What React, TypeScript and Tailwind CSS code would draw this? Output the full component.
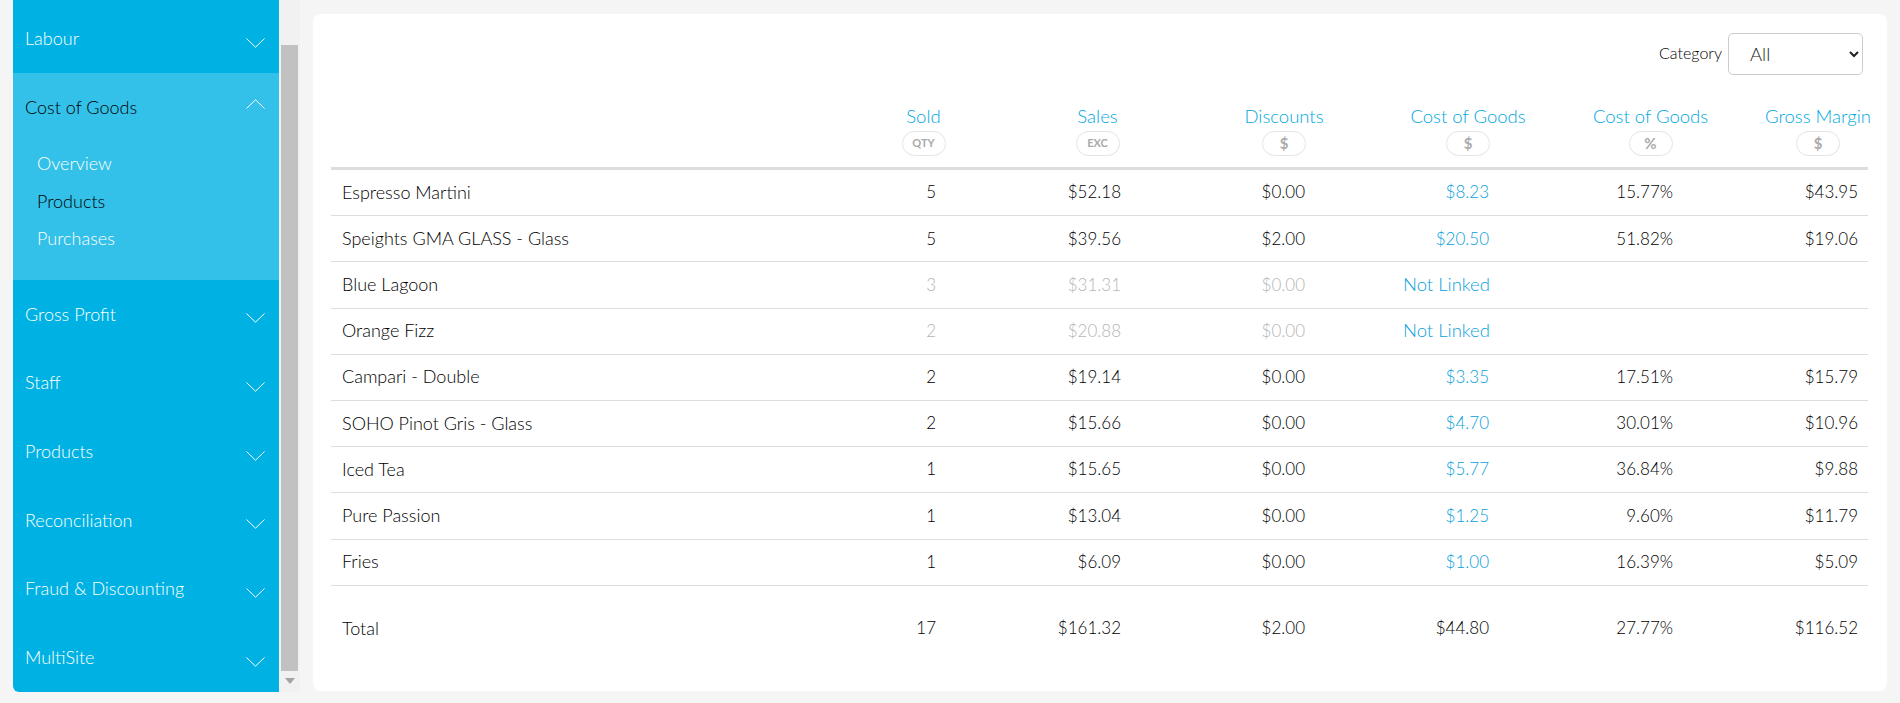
import { ReactNode } from "react";

type Row = {
  name: string;
  sold: string;
  sales: string;
  discounts: string;
  cost: string;
  costPct: string;
  margin: string;
};

const rows: Row[] = [
  { name: "Espresso Martini", sold: "5", sales: "$52.18", discounts: "$0.00", cost: "$8.23", costPct: "15.77%", margin: "$43.95" },
  { name: "Speights GMA GLASS - Glass", sold: "5", sales: "$39.56", discounts: "$2.00", cost: "$20.50", costPct: "51.82%", margin: "$19.06" },
  { name: "Blue Lagoon", sold: "3", sales: "$31.31", discounts: "$0.00", cost: "Not Linked", costPct: "", margin: "" },
  { name: "Orange Fizz", sold: "2", sales: "$20.88", discounts: "$0.00", cost: "Not Linked", costPct: "", margin: "" },
  { name: "Campari - Double", sold: "2", sales: "$19.14", discounts: "$0.00", cost: "$3.35", costPct: "17.51%", margin: "$15.79" },
  { name: "SOHO Pinot Gris - Glass", sold: "2", sales: "$15.66", discounts: "$0.00", cost: "$4.70", costPct: "30.01%", margin: "$10.96" },
  { name: "Iced Tea", sold: "1", sales: "$15.65", discounts: "$0.00", cost: "$5.77", costPct: "36.84%", margin: "$9.88" },
  { name: "Pure Passion", sold: "1", sales: "$13.04", discounts: "$0.00", cost: "$1.25", costPct: "9.60%", margin: "$11.79" },
  { name: "Fries", sold: "1", sales: "$6.09", discounts: "$0.00", cost: "$1.00", costPct: "16.39%", margin: "$5.09" },
];

function Chevron({ up }: { up?: boolean }) {
  return (
    <svg
      width="19"
      height="10"
      viewBox="0 0 19 10"
      fill="none"
      stroke="#ffffff"
      strokeWidth="1"
      className={up ? "mb-[8px]" : "mt-[8px]"}
    >
      <path d={up ? "M0.5 9.5L9.5 0.8L18.5 9.5" : "M0.5 0.5L9.5 9.2L18.5 0.5"} />
    </svg>
  );
}

function NavRow({ label, className = "h-[68.67px]" }: { label: string; className?: string }) {
  return (
    <div className={`flex items-center justify-between pl-[12px] pr-[14px] text-white ${className}`}>
      <span>{label}</span>
      <Chevron />
    </div>
  );
}

function Sidebar() {
  return (
    <div className="flex h-[692px] w-[266px] flex-col rounded-bl-md bg-[#00b2e3] text-[18px] font-light">
      <NavRow label="Labour" className="h-[73px] pt-[4px]" />
      <div className="h-[207px] bg-[#33c1e9]">
        <div className="flex h-[69px] items-center justify-between pl-[12px] pr-[14px] text-[#000000]">
          <span>Cost of Goods</span>
          <Chevron up />
        </div>
        <div className="pl-[24px] pt-[3px]">
          <div className="flex h-[37.5px] items-center text-white">Overview</div>
          <div className="flex h-[37.5px] items-center text-[#000000]">Products</div>
          <div className="flex h-[37.5px] items-center text-white">Purchases</div>
        </div>
      </div>
      <NavRow label="Gross Profit" />
      <NavRow label="Staff" />
      <NavRow label="Products" />
      <NavRow label="Reconciliation" />
      <NavRow label="Fraud & Discounting" />
      <NavRow label="MultiSite" />
    </div>
  );
}

function Scrollbar() {
  return (
    <div className="flex h-[692px] w-[21px] flex-col items-center bg-[#f1f1f1] pt-[45px]">
      <div className="h-[626px] w-[17px] bg-[#c1c1c1]" />
      <svg width="10" height="6" viewBox="0 0 10 6" className="mt-[7px]">
        <path d="M0 0H10L5 6Z" fill="#a3a3a3" />
      </svg>
    </div>
  );
}

function HeadCell({ title, unit, className, small }: { title: string; unit: string; className: string; small?: boolean }) {
  return (
    <div className={`flex flex-col items-center ${className}`}>
      <span className="h-[24px] text-[18.5px] leading-[24px] font-light whitespace-nowrap text-[#00a8e0]">{title}</span>
      <span
        className={`mt-[3px] flex h-[25px] w-[44px] items-center justify-center rounded-full border border-[#e4e4e4] font-bold text-[#aaaaaa] ${
          small ? "text-[11px]" : "text-[15px]"
        }`}
      >
        {unit}
      </span>
    </div>
  );
}

function Cell({ className, children }: { className: string; children?: ReactNode }) {
  return <div className={`text-right text-[17px] whitespace-nowrap ${className}`}>{children}</div>;
}

export default function App() {
  return (
    <div className="flex h-[703px] w-[1900px] overflow-hidden bg-[#f5f5f5] pl-[13px] font-['Lato',sans-serif]">
      <Sidebar />
      <Scrollbar />
      <div className="mt-[14px] ml-[13px] h-[677px] w-[1574px] rounded-lg bg-white pt-[19px] pr-[19px] pl-[18px]">
        <div className="flex h-[42px] items-center justify-end gap-[6px] pr-[5px]">
          <span className="mb-[2px] text-[16px] font-light text-[#000000]">Category</span>
          <select className="h-[42px] w-[135px] rounded-[5px] border border-[#cccccc] bg-white pl-[17px] text-[18.5px] font-light text-[#222222]">
            <option>All</option>
          </select>
        </div>

        <div className="mt-[29px] flex h-[66px] border-b-[3px] border-[#dddddd]">
          <div className="w-[486px]" />
          <HeadCell title="Sold" unit="QTY" small className="w-[213px]" />
          <HeadCell title="Sales" unit="EXC" small className="w-[135px]" />
          <HeadCell title="Discounts" unit="$" className="w-[238px]" />
          <HeadCell title="Cost of Goods" unit="$" className="w-[130px]" />
          <HeadCell title="Cost of Goods" unit="%" className="w-[235px]" />
          <HeadCell title="Gross Margin" unit="$" className="w-[100px]" />
        </div>

        {rows.map((r) => {
          const muted = r.cost === "Not Linked";
          const dim = muted ? "text-[#b5b5b5]" : "";
          return (
            <div key={r.name} className="flex h-[46.2px] items-center border-b border-[#dddddd] pb-[1px] font-light text-[#000000]">
              <div className="w-[486px] pl-[11px] text-[18px]">{r.name}</div>
              <Cell className={`w-[213px] pr-[94px] ${dim}`}>{r.sold}</Cell>
              <Cell className={`w-[135px] pr-[44px] ${dim}`}>{r.sales}</Cell>
              <Cell className={`w-[238px] pr-[98px] ${dim}`}>{r.discounts}</Cell>
              <Cell className="w-[130px] pr-[44px] text-[#0a9fdc]">
                <span className={muted ? "text-[18.5px]" : ""}>{r.cost}</span>
              </Cell>
              <Cell className="w-[235px] pr-[95px]">{r.costPct}</Cell>
              <Cell className="w-[100px] pr-[10px]">{r.margin}</Cell>
            </div>
          );
        })}

        <div className="flex h-[87px] items-center pb-[2px] font-light text-[#000000]">
          <div className="w-[486px] pl-[11px] text-[18px]">Total</div>
          <Cell className="w-[213px] pr-[94px]">17</Cell>
          <Cell className="w-[135px] pr-[44px]">$161.32</Cell>
          <Cell className="w-[238px] pr-[98px]">$2.00</Cell>
          <Cell className="w-[130px] pr-[44px]">$44.80</Cell>
          <Cell className="w-[235px] pr-[95px]">27.77%</Cell>
          <Cell className="w-[100px] pr-[10px]">$116.52</Cell>
        </div>
      </div>
    </div>
  );
}
